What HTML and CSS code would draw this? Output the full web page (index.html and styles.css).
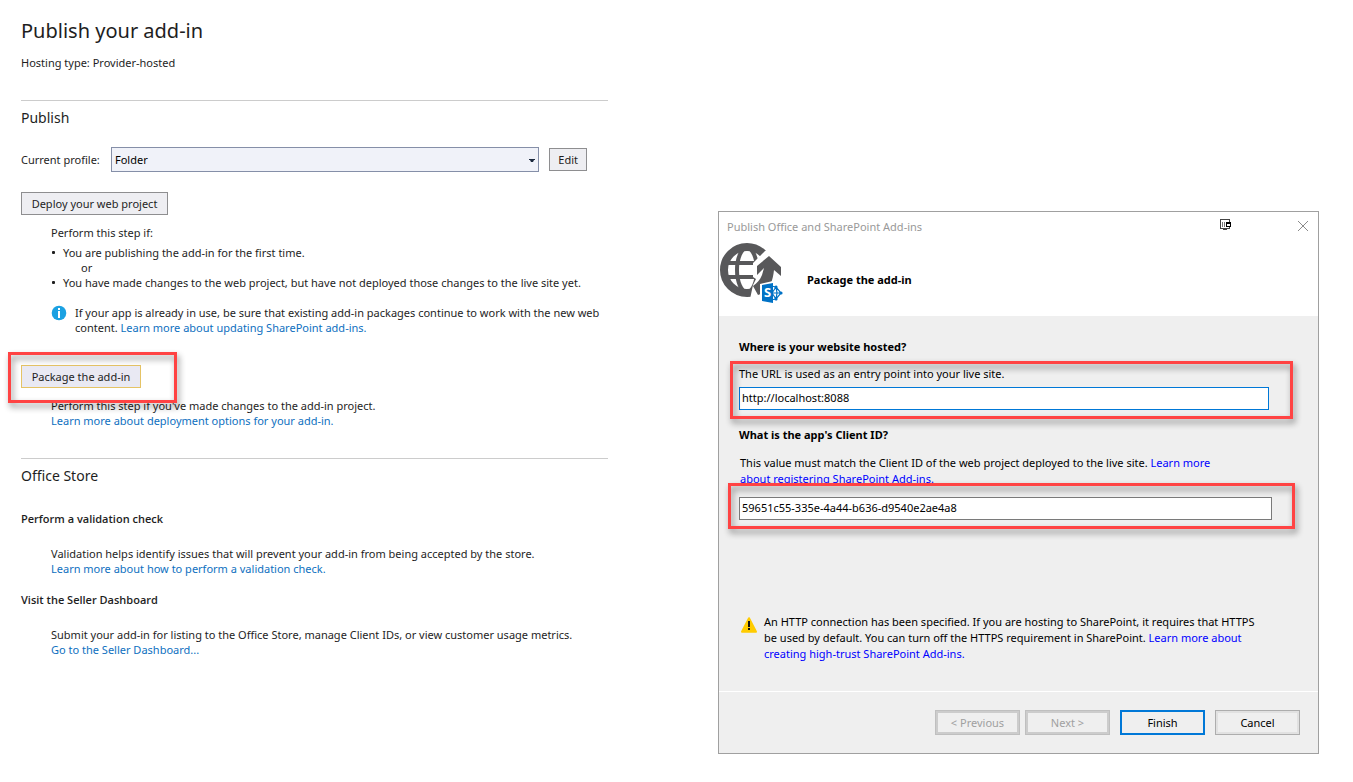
FILE: index.html
```
<!DOCTYPE html>
<html lang="en">
<head>
<meta charset="utf-8">
<title>Publish your add-in</title>
<link rel="stylesheet" href="styles.css">
</head>
<body>
<div class="page">
  <main class="publish">
    <h1>Publish your add-in</h1>
    <p class="hosting">Hosting type: Provider-hosted</p>

    <section class="section">
      <h2>Publish</h2>
      <div class="profile">
        <label for="profile">Current profile:</label>
        <div class="select">
          <select id="profile"><option>Folder</option></select>
          <svg class="select-arrow" width="6" height="3" viewBox="0 0 6 3" aria-hidden="true"><path d="M0 0h6v1H5L4 3H2L1 1H0z" fill="#1b293e"/></svg>
        </div>
        <button class="button" type="button">Edit</button>
      </div>

      <button class="button deploy" type="button">Deploy your web project</button>
      <div class="detail deploy-detail">
        <p>Perform this step if:</p>
        <ul class="conditions">
          <li>You are publishing the add-in for the first time.<span class="or">or</span></li>
          <li>You have made changes to the web project, but have not deployed those changes to the live site yet.</li>
        </ul>
        <div class="info">
          <svg width="16" height="16" viewBox="0 0 16 16" aria-hidden="true"><circle cx="8" cy="8" r="7.3" fill="#1ba1e2"/><path d="M7 3h2v2H7zM7 6h2v7H7z" fill="#fff"/></svg>
          <p>If your app is already in use, be sure that existing add-in packages continue to work with the new web<br>content. <a href="#">Learn more about updating SharePoint add-ins.</a></p>
        </div>
      </div>

      <div class="marked marked-package">
        <button class="button focused" type="button">Package the add-in</button>
        <span class="frame"></span>
      </div>
      <p class="detail package-detail">Perform this step if you've made changes to the add-in project.<br><a href="#">Learn more about deployment options for your add-in.</a></p>
    </section>

    <section class="section">
      <h2>Office Store</h2>
      <h3>Perform a validation check</h3>
      <p class="detail">Validation helps identify issues that will prevent your add-in from being accepted by the store.<br><a href="#">Learn more about how to perform a validation check.</a></p>
      <h3>Visit the Seller Dashboard</h3>
      <p class="detail">Submit your add-in for listing to the Office Store, manage Client IDs, or view customer usage metrics.<br><a href="#">Go to the Seller Dashboard...</a></p>
    </section>
  </main>

  <div class="dialog" role="dialog" aria-labelledby="dialog-title">
    <header class="dialog-head">
      <div class="titlebar">
        <span class="caption" id="dialog-title">Publish Office and SharePoint Add-ins</span>
        <svg class="dock" width="12" height="12" viewBox="0 0 12 12" shape-rendering="crispEdges" aria-hidden="true"><path d="M.5 .5h9v9h-9z" fill="#fff" stroke="#444"/><path d="M2 3h1v5H2zM4 3h1v5H4z" fill="#777"/><path d="M3 10h4v1H3z" fill="#444"/><path d="M6 3h5v5H6z" fill="#000"/><path d="M7 5h3v2H7z" fill="#fff"/></svg>
        <button class="close" type="button" aria-label="Close"><svg width="12" height="12" viewBox="0 0 12 12" aria-hidden="true"><path d="M1 1l10 10M11 1L1 11" stroke="#8b8b8b" fill="none"/></svg></button>
      </div>
      <div class="banner">
        <svg width="64" height="62" viewBox="0 0 64 62" aria-hidden="true">
          <g fill="none" stroke="#58585a">
            <circle cx="27" cy="28" r="23" stroke-width="8"/>
            <ellipse cx="27" cy="28" rx="10" ry="22" stroke-width="4"/>
            <path d="M7 21h40M7 35h40" stroke-width="4"/>
          </g>
          <path d="M45 9L33 21v14l3 2-3 6-3 14h34V4z" fill="#fff"/>
          <path d="M49 14L61 25v9l-7-6c-1 10-4 17-8 22l-8 3-5-9c4-3 7-6 9-11l2-7-7 7v-9z" fill="#58585a"/>
          <path d="M40 42l13-3 10 5v18H40z" fill="#fff"/>
          <g fill="none" stroke="#0072c6" stroke-width="1.2"><path d="M51 44l5 1 5 6-5 6-5 1M52 51l4-6 1 6-1 6-4-6h9"/></g>
          <g fill="#0072c6"><circle cx="56" cy="45" r="1.6"/><circle cx="61" cy="51" r="1.6"/><circle cx="56" cy="57" r="1.6"/><path d="M42 43l11-2v20l-11-2z"/></g>
          <text class="logo-letter" x="44" y="55">S</text>
        </svg>
        <h2>Package the add-in</h2>
      </div>
    </header>

    <form class="dialog-body">
      <div class="question">Where is your website hosted?</div>
      <div class="marked marked-url">
        <label for="url">The URL is used as an entry point into your live site.</label>
        <input class="textbox active" id="url" type="text" value="http://localhost:8088">
        <span class="frame"></span>
      </div>
      <label class="question" for="client">What is the app's Client ID?</label>
      <p class="client-note">This value must match the Client ID of the web project deployed to the live site. <a href="#">Learn more<br>about registering SharePoint Add-ins.</a></p>
      <div class="marked marked-client">
        <input class="textbox" id="client" type="text" value="59651c55-335e-4a44-b636-d9540e2ae4a8">
        <span class="frame"></span>
      </div>
      <div class="warning">
        <svg width="18" height="18" viewBox="0 0 18 18" aria-hidden="true"><path d="M9 2.2L16 15.8H2z" fill="#fc0" stroke="#fc0" stroke-width="2" stroke-linejoin="round"/><path d="M8 5h2v6H8zM8 12h2v2H8z" fill="#111"/></svg>
        <p>An HTTP connection has been specified. If you are hosting to SharePoint, it requires that HTTPS<br>be used by default. You can turn off the HTTPS requirement in SharePoint. <a href="#">Learn more about<br>creating high-trust SharePoint Add-ins.</a></p>
      </div>
    </form>

    <footer class="dialog-foot">
      <div class="steps">
        <button class="command" type="button" disabled>&lt; Previous</button>
        <button class="command" type="button" disabled>Next &gt;</button>
      </div>
      <button class="command primary" type="button">Finish</button>
      <button class="command" type="button">Cancel</button>
    </footer>
  </div>
</div>
</body>
</html>
```
FILE: styles.css
```
* { box-sizing: border-box; }

body {
  margin: 0;
  background: #fff;
  color: #1e1e1e;
  font: 11px/15px "Noto Sans", "Open Sans", sans-serif;
}

h1, h2, h3, p, ul { margin: 0; padding: 0; }
button, input, select { font: inherit; color: inherit; }
a { color: #0e70c0; text-decoration: none; }

.page {
  display: grid;
  grid-template-columns: 587fr 601fr;
  gap: 110px;
  align-items: start;
  padding: 0 34px 28px 21px;
}

/* Publish page */
.publish { padding-top: 17px; white-space: nowrap; }
h1 { font-size: 20px; line-height: 28px; font-weight: 400; }
.hosting { margin: 10px 0 30px; }

.section { border-top: 1px solid #ccc; padding-top: 7px; }
.section h2 { font-size: 14px; line-height: 20px; font-weight: 400; }

.profile { display: flex; align-items: center; gap: 10px; margin: 19px 21px 20px 0; }
.profile label { width: 80px; }
.select { position: relative; flex: 1; }
.select select {
  display: block;
  width: 100%;
  height: 25px;
  padding: 0 3px;
  appearance: none;
  border: 1px solid #858fa8;
  border-radius: 0;
  background: #f0f2f9;
  color: #000;
}
.select-arrow { position: absolute; right: 4px; top: 12px; pointer-events: none; }

.button {
  display: block;
  height: 23px;
  padding: 0 8px;
  border: 1px solid #8e8e90;
  background: #eeeef2;
}
.deploy { min-width: 147px; }
.focused { min-width: 120px; border-color: #e5c365; background: #e9e9f3; }

.detail { padding-left: 30px; }
.deploy-detail { margin: 10px 0 30px; }
.conditions { margin: 5px 0 15px; list-style: none; }
.conditions li { position: relative; padding-left: 12px; }
.conditions li::before {
  content: "";
  position: absolute;
  left: 1px;
  top: 6px;
  width: 3px;
  height: 3px;
  border-radius: 1px;
  background: #1e1e1e;
}
.or { display: block; padding-left: 18px; }
.info { display: flex; gap: 8px; }
.package-detail { margin: 10px 0 30px; }

.section h3 { margin: 25px 0 20px; font: 600 11px/15px "Open Sans", sans-serif; }
.section .detail + h3 { margin-top: 16px; }

/* Red callout frames laid over the controls */
.marked { position: relative; }
.frame {
  position: absolute;
  z-index: 1;
  border: 3px solid #ff4343;
  filter: drop-shadow(2px 4px 3px rgba(0, 0, 0, .45));
  pointer-events: none;
}
.marked-package { width: max-content; }
.marked-package .frame { inset: -13px -36px -15px -13px; }
.marked-url .frame { inset: -5px -24px -9px -9px; }
.marked-client .frame { inset: -14px -23px -9px -11px; }

/* Wizard dialog */
.dialog {
  margin-top: 211px;
  border: 1px solid #a0a0a0;
  background: #efefef;
  color: #000;
  white-space: nowrap;
}
.dialog a { color: #00f; }
.dialog-head { background: #fff; padding-bottom: 12px; }
.titlebar { display: flex; align-items: center; height: 28px; margin-bottom: 2px; padding: 0 9px 0 8px; }
.caption { flex: 1; color: #999; }
.dock { margin-right: 65px; margin-bottom: 2px; }
.close { display: flex; padding: 0; border: 0; background: none; }
.banner { display: flex; align-items: center; gap: 23px; padding-left: 1px; }
.banner h2 { padding-top: 13px; font-size: 11px; line-height: 15px; }

.dialog-body { padding: 23px 46px 29px 20px; }
.question { display: block; font-weight: 700; }
.marked-url { margin: 12px 3px 17px 0; }
.marked-url label { display: block; margin-bottom: 6px; }
.textbox {
  display: block;
  width: 100%;
  height: 23px;
  padding: 0 2px 2px;
  border: 1px solid #7a7a7a;
  border-radius: 0;
  outline: 0;
  background: #fff;
}
.textbox.active { border-color: #0078d7; }
.client-note { margin: 13px 0 10px; padding-left: 1px; line-height: 16px; }
.warning { display: flex; gap: 6px; margin-top: 94px; padding-left: 1px; line-height: 16px; }
.warning svg { margin-top: 2px; }

.dialog-foot {
  display: flex;
  justify-content: flex-end;
  gap: 10px;
  padding: 18px;
  border-top: 1px solid #fff;
}
.steps { display: flex; gap: 5px; margin-right: 0; }
.command {
  width: 85px;
  height: 25px;
  padding: 0;
  border: 1px solid #adadad;
  box-shadow: inset 0 0 0 2px #e1e1e1;
  background: #efefef;
}
.command:disabled { border-color: #bfbfbf; box-shadow: inset 0 0 0 2px #ccc; color: #a0a0a0; }
.command.primary { border: 2px solid #0078d7; box-shadow: none; }

.logo-letter { font: 700 13px "Noto Sans", sans-serif; fill: #fff; }
```
